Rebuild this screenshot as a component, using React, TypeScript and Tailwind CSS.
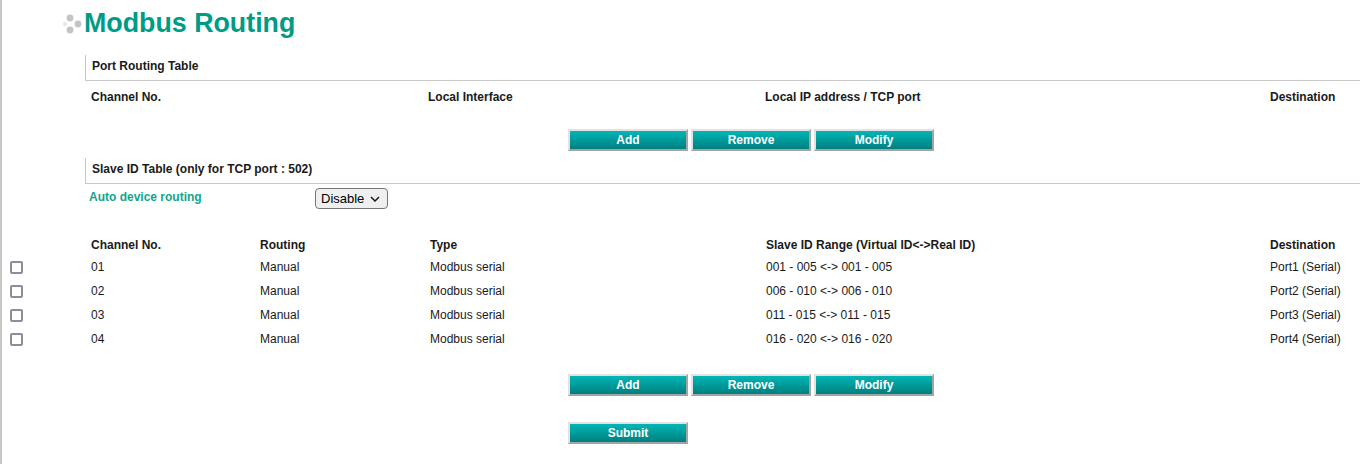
import React from "react";

type SlaveRow = {
  channel: string;
  routing: string;
  type: string;
  range: string;
  destination: string;
};

const slaveRows: SlaveRow[] = [
  { channel: "01", routing: "Manual", type: "Modbus serial", range: "001 - 005 <-> 001 - 005", destination: "Port1 (Serial)" },
  { channel: "02", routing: "Manual", type: "Modbus serial", range: "006 - 010 <-> 006 - 010", destination: "Port2 (Serial)" },
  { channel: "03", routing: "Manual", type: "Modbus serial", range: "011 - 015 <-> 011 - 015", destination: "Port3 (Serial)" },
  { channel: "04", routing: "Manual", type: "Modbus serial", range: "016 - 020 <-> 016 - 020", destination: "Port4 (Serial)" },
];

function TealButton({ label }: { label: string }) {
  return (
    <button
      type="button"
      className="w-[120px] h-[22px] border-2 border-t-[#e2e2e2] border-l-[#e2e2e2] border-b-[#a4a4a4] border-r-[#a4a4a4] bg-linear-to-b from-[#00b6b6] to-[#007f7f] text-white font-bold text-[12px] leading-none"
    >
      {label}
    </button>
  );
}

function SectionHeader({ title }: { title: string }) {
  return (
    <div className="ml-[83px] h-[26px] border-l border-b border-[#c8c8c8] pl-[6px] pt-[1px] leading-[20px] font-bold text-[12px]">
      {title}
    </div>
  );
}

function ButtonRow() {
  return (
    <div className="flex gap-[3px] pl-[566px]">
      <TealButton label="Add" />
      <TealButton label="Remove" />
      <TealButton label="Modify" />
    </div>
  );
}

export default function App() {
  return (
    <div
      className="min-h-[464px] w-[1360px] border-l-2 border-[#c6c6c6] bg-white text-[12px] text-[#1a1a1a] overflow-hidden"
      style={{ fontFamily: '"Liberation Sans", Arial, sans-serif' }}
    >
      {/* Title */}
      <div className="mt-[7px] flex items-center pl-[61px]">
        <svg width="20" height="22" viewBox="0 0 20 22" className="mt-[1px]">
          <circle cx="2" cy="11" r="2" fill="#e6e6e6" />
          <circle cx="7" cy="5" r="3.4" fill="#c4c4c4" />
          <circle cx="15" cy="11" r="3.4" fill="#c4c4c4" />
          <circle cx="7" cy="17" r="3.4" fill="#c4c4c4" />
        </svg>
        <h1 className="ml-[1px] text-[26.8px] leading-[32px] font-bold text-[#009b85]">Modbus Routing</h1>
      </div>

      {/* Port Routing Table */}
      <div className="mt-[16px]">
        <SectionHeader title="Port Routing Table" />
      </div>
      <div className="grid grid-cols-[84px_337px_337px_505px_1fr] h-[32px] items-center font-bold">
        <div />
        <div className="pl-[5px]">Channel No.</div>
        <div className="pl-[5px]">Local Interface</div>
        <div className="pl-[5px]">Local IP address / TCP port</div>
        <div className="pl-[5px] whitespace-nowrap">Destination</div>
      </div>
      <div className="mt-[16px]">
        <ButtonRow />
      </div>

      {/* Slave ID Table */}
      <div className="mt-[7px]">
        <SectionHeader title="Slave ID Table (only for TCP port : 502)" />
      </div>
      <div className="mt-[4px] flex items-start">
        <div className="w-[313px] pl-[87px] leading-[18px] font-bold text-[#14a48c]">Auto device routing</div>
        <div className="relative h-[21px] w-[73px]">
          <select className="appearance-none h-[21px] w-[73px] border border-[#767676] rounded-[4px] bg-[#efefef] text-[13px] text-black pl-[5px] leading-[19px]">
            <option>Disable</option>
            <option>Enable</option>
          </select>
          <svg
            width="10"
            height="6"
            viewBox="0 0 10 6"
            className="pointer-events-none absolute right-[8px] top-[8px]"
          >
            <path d="M1 1 L5 5 L9 1" fill="none" stroke="#1a1a1a" strokeWidth="1.5" />
          </svg>
        </div>
      </div>

      <div className="mt-[26px] grid grid-cols-[84px_169px_170px_336px_504px_1fr] h-[20px] items-center font-bold">
        <div />
        <div className="pl-[5px]">Channel No.</div>
        <div className="pl-[5px]">Routing</div>
        <div className="pl-[5px]">Type</div>
        <div className="pl-[5px]">Slave ID Range (Virtual ID&lt;-&gt;Real ID)</div>
        <div className="pl-[5px] whitespace-nowrap">Destination</div>
      </div>
      {slaveRows.map((row) => (
        <div key={row.channel} className="grid grid-cols-[84px_169px_170px_336px_504px_1fr] h-[24px] items-center">
          <div className="pl-[8px] flex items-center">
            <input
              type="checkbox"
              className="appearance-none m-0 w-[13px] h-[13px] border-2 border-[#8d8c98] rounded-[2px] bg-white"
            />
          </div>
          <div className="pl-[5px]">{row.channel}</div>
          <div className="pl-[5px]">{row.routing}</div>
          <div className="pl-[5px]">{row.type}</div>
          <div className="pl-[5px]">{row.range}</div>
          <div className="pl-[5px] whitespace-nowrap">{row.destination}</div>
        </div>
      ))}

      <div className="mt-[23px]">
        <ButtonRow />
      </div>
      <div className="mt-[26px] pl-[566px]">
        <TealButton label="Submit" />
      </div>
    </div>
  );
}
